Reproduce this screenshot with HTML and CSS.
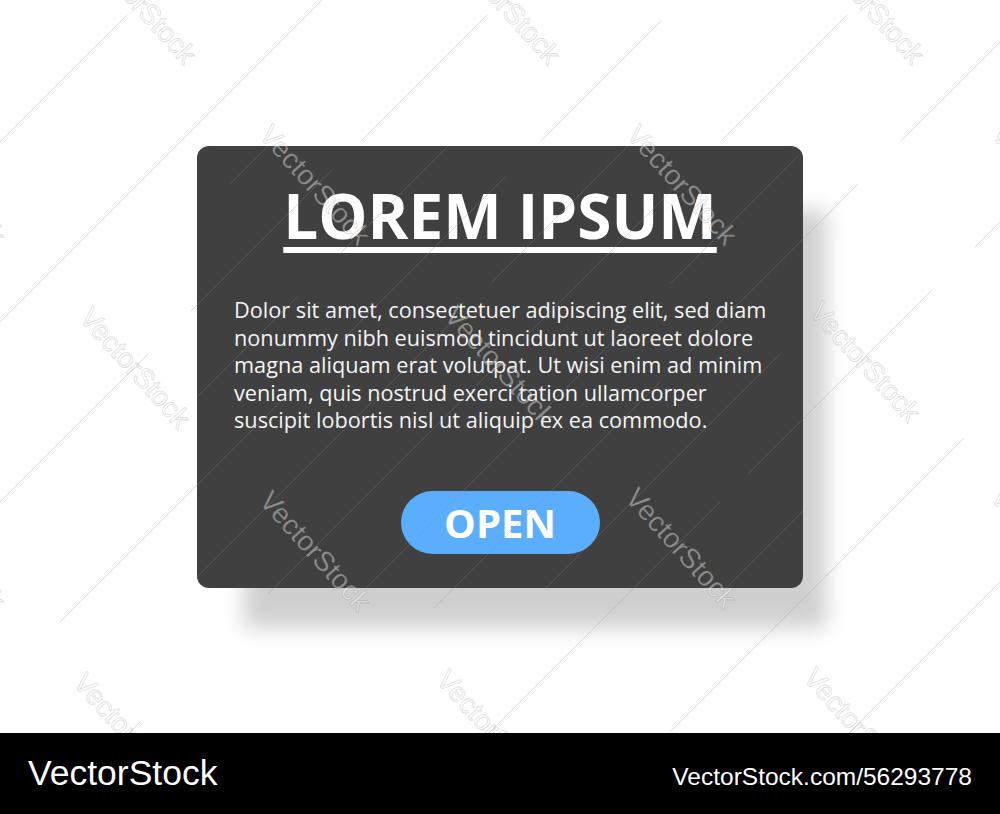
FILE: index.html
```html
<!DOCTYPE html>
<html lang="en">
<head>
<meta charset="utf-8">
<title>Lorem Ipsum</title>
<link rel="stylesheet" href="styles.css">
</head>
<body>
<div class="page">
  <main class="stage">
    <div class="card">
      <h1 class="title">LOREM IPSUM</h1>
      <p class="text">Dolor sit amet, consectetuer adipiscing elit, sed diam<br>nonummy nibh euismod tincidunt ut laoreet dolore<br>magna aliquam erat volutpat. Ut wisi enim ad minim<br>veniam, quis nostrud exerci tation ullamcorper<br>suscipit lobortis nisl ut aliquip ex ea commodo.</p>
      <a class="btn">OPEN</a>
    </div>
    <svg class="watermark" width="1000" height="733" viewBox="0 0 1000 733" aria-hidden="true">
      <defs>
        <clipPath id="cardclip"><rect x="197" y="146" width="606" height="442" rx="12"/></clipPath>
      </defs>
      <g class="wm-lines">
        <line x1="142" y1="0" x2="0" y2="142" stroke-dasharray="0 21 200 40"/>
        <line x1="322" y1="0" x2="0" y2="322" stroke-dasharray="460 60"/>
        <line x1="502" y1="0" x2="0" y2="502" stroke-dasharray="0 20 180 40 200 60 300"/>
        <line x1="682" y1="0" x2="0" y2="682" stroke-dasharray="0 30 170 50 260 40 300"/>
        <line x1="862" y1="0" x2="129" y2="733" stroke-dasharray="0 20 180 60 220 40 300"/>
        <line x1="1042" y1="0" x2="309" y2="733" stroke-dasharray="0 20 180 60 240 40 300"/>
        <line x1="1222" y1="0" x2="489" y2="733" stroke-dasharray="0 200 150 60 260 40 300"/>
        <line x1="1402" y1="0" x2="669" y2="733" stroke-dasharray="0 380 180 60 300"/>
        <line x1="1582" y1="0" x2="849" y2="733" stroke-dasharray="0 560 200 60 300"/>
      </g>
      <g class="wm-lines" clip-path="url(#cardclip)">
        <line x1="414" y1="0" x2="0" y2="414" stroke-dasharray="0 150 110 60 300"/>
        <line x1="594" y1="0" x2="0" y2="594" stroke-dasharray="0 200 160 60 300"/>
        <line x1="774" y1="0" x2="41" y2="733" stroke-dasharray="0 200 200 50 300"/>
        <line x1="954" y1="0" x2="221" y2="733" stroke-dasharray="0 220 180 60 300"/>
        <line x1="1134" y1="0" x2="401" y2="733" stroke-dasharray="0 240 200 60 300"/>
        <line x1="1314" y1="0" x2="581" y2="733" stroke-dasharray="0 420 200 60 300"/>
      </g>
      <g class="wm-text">
        <text x="141" y="4" transform="rotate(48 141 4)">VectorStock</text>
        <text x="505" y="4" transform="rotate(48 505 4)">VectorStock</text>
        <text x="869" y="4" transform="rotate(48 869 4)">VectorStock</text>
        <text x="-50" y="185" transform="rotate(48 -50 185)">VectorStock</text>
        <text x="315" y="185" transform="rotate(48 315 185)">VectorStock</text>
        <text x="682" y="185" transform="rotate(48 682 185)">VectorStock</text>
        <text x="1047" y="185" transform="rotate(48 1047 185)">VectorStock</text>
        <text x="135" y="368" transform="rotate(48 135 368)">VectorStock</text>
        <text x="500" y="366" transform="rotate(48 500 366)">VectorStock</text>
        <text x="865" y="362" transform="rotate(48 865 362)">VectorStock</text>
        <text x="-50" y="550" transform="rotate(48 -50 550)">VectorStock</text>
        <text x="315" y="551" transform="rotate(48 315 551)">VectorStock</text>
        <text x="681" y="548" transform="rotate(48 681 548)">VectorStock</text>
        <text x="1046" y="548" transform="rotate(48 1046 548)">VectorStock</text>
        <text x="129" y="733" transform="rotate(48 129 733)">VectorStock</text>
        <text x="492" y="730" transform="rotate(48 492 730)">VectorStock</text>
        <text x="859" y="728" transform="rotate(48 859 728)">VectorStock</text>
      </g>
    </svg>
  </main>
  <footer class="bar">
    <span class="brand">VectorStock</span>
    <span class="ref">VectorStock.com/56293778</span>
  </footer>
</div>
</body>
</html>
```

FILE: styles.css
```css
* { box-sizing: border-box; }

html, body {
  margin: 0;
  padding: 0;
  background: #ffffff;
}

.page {
  width: 1000px;
  height: 814px;
  overflow: hidden;
}

.stage {
  position: relative;
  height: 733px;
  padding-top: 146px;
  overflow: hidden;
  background: #ffffff;
}

.card {
  width: 606px;
  height: 442px;
  margin: 0 auto;
  padding: 38px 37px 34px;
  background: #404040;
  border-radius: 12px;
  box-shadow: 35px 52px 20px -12px rgba(0, 0, 0, 0.19);
}

.title {
  margin: 0;
  font-family: "Open Sans", "Noto Sans", sans-serif;
  font-weight: 700;
  font-size: 62px;
  line-height: 63px;
  color: #ffffff;
  text-align: center;
  text-decoration: underline;
  text-decoration-thickness: 6px;
  text-underline-offset: 8px;
}

.text {
  margin: 49px 0 0;
  font-family: "Open Sans", "Noto Sans", sans-serif;
  font-size: 21.7px;
  line-height: 27.5px;
  color: #f4f4f4;
  white-space: nowrap;
}

.btn {
  display: block;
  width: 199px;
  height: 63px;
  margin: 57.5px auto 0;
  border-radius: 32px;
  background: #5aaefb;
  color: #ffffff;
  font-family: "Open Sans", "Noto Sans", sans-serif;
  font-weight: 700;
  font-size: 40px;
  line-height: 63px;
  text-align: center;
}

.watermark {
  position: absolute;
  left: 0;
  top: 0;
  pointer-events: none;
}

.wm-lines line {
  stroke: rgba(140, 140, 140, 0.32);
  stroke-width: 1;
}

.wm-text text {
  font-family: "Liberation Sans", Arial, sans-serif;
  font-size: 28px;
  text-anchor: middle;
  dominant-baseline: central;
  fill: rgba(255, 255, 255, 0.42);
  stroke: rgba(0, 0, 0, 0.12);
  stroke-width: 1.1;
}

.bar {
  height: 81px;
  background: #000000;
  display: flex;
  justify-content: space-between;
  align-items: baseline;
  padding: 20px 28px 0;
  font-family: "Liberation Sans", Arial, sans-serif;
  color: #ffffff;
}

.brand {
  font-size: 35.5px;
  line-height: 1.149;
}

.ref {
  font-size: 24.5px;
  line-height: 1.149;
}
```
